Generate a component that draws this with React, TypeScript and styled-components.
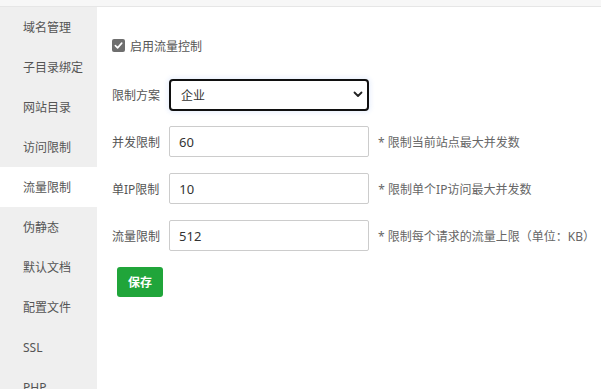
import React from 'react'
import styled, { createGlobalStyle } from 'styled-components'

const GlobalStyle = createGlobalStyle`
  html, body {
    margin: 0;
    padding: 0;
    background: #fff;
  }
  body {
    font-family: "Noto Sans", "Noto Sans CJK SC", sans-serif;
    font-size: 12px;
    color: #555;
  }
  * {
    box-sizing: border-box;
  }
`

const Page = styled.div`
  width: 601px;
  height: 389px;
  overflow: hidden;
  display: flex;
  flex-direction: column;
`

const TopStrip = styled.div`
  height: 7px;
  flex-shrink: 0;
  background: #f7f7f7;
  border-bottom: 1px solid #e6e6e6;
`

const Body = styled.div`
  flex: 1;
  display: flex;
  min-height: 0;
`

const Sidebar = styled.ul`
  width: 97px;
  flex-shrink: 0;
  margin: 0;
  padding: 0;
  list-style: none;
  background: #efefef;
`

const NavItem = styled.li<{ $active?: boolean }>`
  height: 40px;
  display: flex;
  align-items: center;
  padding-left: 23px;
  font-size: 12px;
  color: #555;
  background: ${({ $active }) => ($active ? '#fff' : 'transparent')};
  white-space: nowrap;
`

const Content = styled.div`
  flex: 1;
  padding: 32px 0 0 15px;
`

const CheckRow = styled.label`
  display: flex;
  align-items: center;
  gap: 5px;
  height: 13px;
  margin-bottom: 27px;
  color: #555;
`

const CheckBox = styled.span`
  width: 13px;
  height: 13px;
  border-radius: 2px;
  background: #6e6e6e;
  display: flex;
  align-items: center;
  justify-content: center;
`

const FormRow = styled.div<{ $mb?: number }>`
  display: flex;
  align-items: center;
  margin-bottom: ${({ $mb }) => $mb ?? 16}px;
`

const Label = styled.span<{ $gap?: number }>`
  margin-right: ${({ $gap }) => $gap ?? 9}px;
  color: #555;
  white-space: nowrap;
`

const SelectWrap = styled.div`
  position: relative;
  width: 200px;
  height: 32px;
`

const Select = styled.select`
  appearance: none;
  width: 100%;
  height: 100%;
  border: 2px solid #101010;
  border-radius: 4px;
  background: #fff;
  padding: 0 0 0 10px;
  font-family: inherit;
  font-size: 12px;
  color: #333;
  outline: none;
  box-shadow: 0 0 4px 2px rgba(120, 160, 240, 0.14);
`

const Chevron = styled.svg`
  position: absolute;
  right: 6px;
  top: 12px;
  pointer-events: none;
`

const Input = styled.input`
  width: 200px;
  height: 31px;
  border: 1px solid #ccc;
  border-radius: 2px;
  padding: 0 9px;
  font-family: inherit;
  font-size: 13px;
  color: #333;
  outline: none;
`

const Hint = styled.span`
  margin-left: 9px;
  color: #666;
  white-space: nowrap;
`

const SaveButton = styled.button`
  margin-left: 5px;
  width: 46px;
  height: 30px;
  border: none;
  border-radius: 3px;
  background: #20a53a;
  color: #fff;
  font-family: inherit;
  font-size: 12px;
  font-weight: 600;
  cursor: pointer;
`

const navItems = ['域名管理', '子目录绑定', '网站目录', '访问限制', '流量限制', '伪静态', '默认文档', '配置文件', 'SSL', 'PHP']

const App = () => (
  <>
    <GlobalStyle />
    <Page>
      <TopStrip />
      <Body>
        <Sidebar>
          {navItems.map((item) => (
            <NavItem key={item} $active={item === '流量限制'}>
              {item}
            </NavItem>
          ))}
        </Sidebar>
        <Content>
          <CheckRow>
            <CheckBox>
              <svg width="9" height="9" viewBox="0 0 10 10">
                <path d="M1.5 5.2 L4 7.6 L8.6 2.4" fill="none" stroke="#fff" strokeWidth="1.8" strokeLinecap="round" strokeLinejoin="round" />
              </svg>
            </CheckBox>
            启用流量控制
          </CheckRow>
          <FormRow $mb={15}>
            <Label>限制方案</Label>
            <SelectWrap>
              <Select defaultValue="企业">
                <option>企业</option>
                <option>个人</option>
                <option>自定义</option>
              </Select>
              <Chevron width="10" height="7" viewBox="0 0 10 7">
                <path d="M1.5 1.5 L5 5 L8.5 1.5" fill="none" stroke="#222" strokeWidth="1.8" strokeLinecap="round" strokeLinejoin="round" />
              </Chevron>
            </SelectWrap>
          </FormRow>
          <FormRow>
            <Label>并发限制</Label>
            <Input defaultValue="60" />
            <Hint>* 限制当前站点最大并发数</Hint>
          </FormRow>
          <FormRow>
            <Label $gap={10}>单IP限制</Label>
            <Input defaultValue="10" />
            <Hint>* 限制单个IP访问最大并发数</Hint>
          </FormRow>
          <FormRow>
            <Label>流量限制</Label>
            <Input defaultValue="512" />
            <Hint>* 限制每个请求的流量上限（单位：KB）</Hint>
          </FormRow>
          <SaveButton>保存</SaveButton>
        </Content>
      </Body>
    </Page>
  </>
)

export default App
